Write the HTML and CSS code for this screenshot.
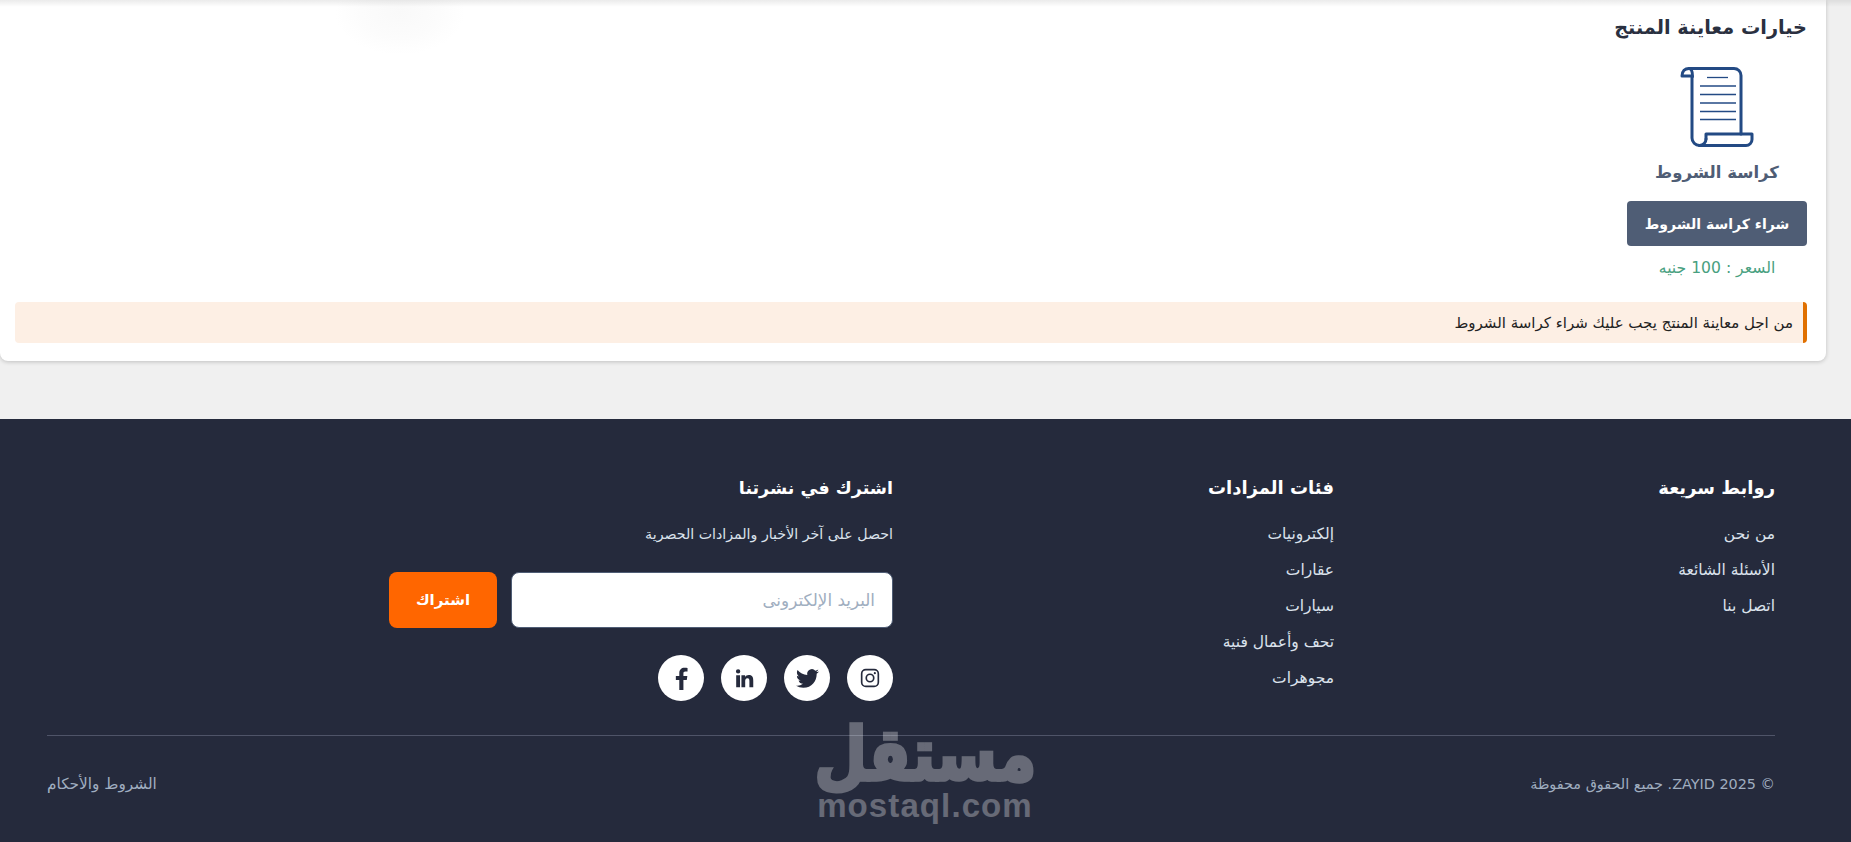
FILE: index.html
```html
<!DOCTYPE html>
<html lang="ar" dir="rtl">
<head>
<meta charset="utf-8">
<title>خيارات معاينة المنتج</title>
<link rel="stylesheet" href="styles.css">
</head>
<body>
<main class="page">
  <section class="card">
    <span class="blob"></span>
    <h2 class="card-title">خيارات معاينة المنتج</h2>
    <div class="option">
      <svg class="scroll" viewBox="0 0 74 80" fill="none" stroke="#234a84" stroke-width="3" stroke-linejoin="round" stroke-linecap="round">
        <path d="M12 10V71a7.500 7.500 0 0 0 7.500 7.500H66a6 6 0 0 0 6-6V67H26v5"/>
        <path d="M26 72a6.500 6.500 0 0 1-6.500 6.500"/>
        <path d="M12 9H2c0-5 3-7.500 7-7.500H54a7 7 0 0 1 7 7V67"/>
        <path d="M9 1.500c2.500 0 3.500 3 3.500 8"/>
        <g stroke-width="1.300" stroke-linecap="butt">
          <path d="M27 10.500H48"/>
          <path d="M20 19H56"/>
          <path d="M20 27.500H56"/>
          <path d="M20 36H56"/>
          <path d="M20 44.500H56"/>
          <path d="M20 52.500H56"/>
        </g>
      </svg>
      <h3 class="option-name">كراسة الشروط</h3>
      <button class="buy" type="button">شراء كراسة الشروط</button>
      <p class="price">السعر : 100 جنيه</p>
    </div>
    <div class="notice">من اجل معاينة المنتج يجب عليك شراء كراسة الشروط</div>
  </section>
</main>
<footer class="footer">
  <div class="columns">
    <div class="col">
      <h4 class="col-title">روابط سريعة</h4>
      <ul class="links">
        <li>من نحن</li>
        <li>الأسئلة الشائعة</li>
        <li>اتصل بنا</li>
      </ul>
    </div>
    <div class="col">
      <h4 class="col-title">فئات المزادات</h4>
      <ul class="links">
        <li>إلكترونيات</li>
        <li>عقارات</li>
        <li>سيارات</li>
        <li>تحف وأعمال فنية</li>
        <li>مجوهرات</li>
      </ul>
    </div>
    <div class="col">
      <h4 class="col-title">اشترك في نشرتنا</h4>
      <p class="lead">احصل على آخر الأخبار والمزادات الحصرية</p>
      <form class="subscribe">
        <input class="email" type="text" placeholder="البريد الإلكترونى">
        <button class="send" type="button">اشتراك</button>
      </form>
      <div class="social">
        <a class="soc" href="#" aria-label="Instagram">
          <svg viewBox="0 0 24 24" width="20" height="20" fill="none" stroke="#252a3c" stroke-width="2"><rect x="2" y="2" width="20" height="20" rx="5"/><circle cx="12" cy="12" r="4.500"/><circle cx="17.800" cy="6.200" r="1.300" fill="#252a3c" stroke="none"/></svg>
        </a>
        <a class="soc" href="#" aria-label="Twitter">
          <svg viewBox="0 0 24 24" width="23" height="23" fill="#252a3c"><path d="M23.950 4.570a10 10 0 0 1-2.820.77 4.960 4.960 0 0 0 2.160-2.720c-.95.550-2 .96-3.130 1.180a4.920 4.920 0 0 0-8.380 4.480C7.690 8.100 4.060 6.130 1.640 3.160a4.820 4.820 0 0 0-.66 2.470c0 1.710.87 3.210 2.190 4.100a4.900 4.900 0 0 1-2.230-.62v.06a4.920 4.920 0 0 0 3.950 4.830 4.940 4.940 0 0 1-2.210.08 4.940 4.940 0 0 0 4.600 3.420A9.870 9.870 0 0 1 0 19.540a14 14 0 0 0 7.560 2.210c9.050 0 14-7.500 14-13.980 0-.21 0-.42-.02-.63a9.940 9.940 0 0 0 2.460-2.550z"/></svg>
        </a>
        <a class="soc" href="#" aria-label="LinkedIn">
          <svg viewBox="0 0 24 24" width="21" height="21" fill="#252a3c"><path d="M6.900 22H2.500V8.200h4.400zM4.700 6.300a2.500 2.500 0 1 1 0-5 2.500 2.500 0 0 1 0 5zM22 22h-4.400v-6.700c0-1.600 0-3.700-2.200-3.700s-2.600 1.700-2.600 3.500V22H8.500V8.200h4.200v1.900h.1c.6-1.100 2-2.200 4.100-2.200 4.400 0 5.100 2.900 5.100 6.600z"/></svg>
        </a>
        <a class="soc" href="#" aria-label="Facebook">
          <svg viewBox="0 0 24 24" width="23" height="23" fill="#252a3c"><path d="M14 24V13.500h3.500l.6-4.200H14V6.700c0-1.200.4-2 2.100-2h2.200V1c-.4 0-1.700-.2-3.200-.2-3.200 0-5.400 2-5.400 5.500v3H6.100v4.200h3.600V24z"/></svg>
        </a>
      </div>
    </div>
  </div>
  <div class="bottom">
    <span class="copy">© 2025 ZAYID. جميع الحقوق محفوظة</span>
    <span class="terms">الشروط والأحكام</span>
  </div>
  <div class="mark">
    <span class="mark-ar">مستقل</span>
    <span class="mark-en">mostaql.com</span>
  </div>
</footer>
</body>
</html>
```
FILE: styles.css
```css
* { box-sizing: border-box; }
html, body { margin: 0; padding: 0; }
body {
  position: relative;
  background: #f0f0f0;
  font-family: "DejaVu Sans", "Noto Sans", sans-serif;
  color: #252a3c;
  height: 842px;
  overflow: hidden;
}
body::before {
  content: "";
  position: absolute;
  inset: 0 0 auto 0;
  height: 7px;
  background: linear-gradient(rgba(0,0,0,.08), rgba(0,0,0,0));
  z-index: 2;
}
.page { padding: 0 25px 0 0; height: 419px; }
.card {
  position: relative;
  background: #fff;
  height: 361px;
  border-radius: 0 0 8px 8px;
  padding: 14px 19px 0 15px;
  box-shadow: 0 1px 4px rgba(0,0,0,.2);
  overflow: hidden;
}
.blob {
  position: absolute;
  left: 335px;
  top: -30px;
  width: 130px;
  height: 85px;
  border-radius: 50%;
  background: radial-gradient(closest-side, #f9f9f9, #fcfcfc 60%, #ffffff);
}
.card-title {
  position: relative;
  margin: 0;
  font-size: 19.300px;
  line-height: 28px;
  font-weight: 700;
  color: #2a3040;
}
.option {
  display: flex;
  flex-direction: column;
  align-items: center;
  width: 180px;
  margin-top: 25px;
}
.scroll { width: 74px; height: 80px; display: block; }
.option-name {
  margin: 14px 0 0;
  font-size: 16.500px;
  line-height: 24px;
  font-weight: 700;
  color: #4f5d75;
}
.buy {
  width: 180px;
  height: 45px;
  margin-top: 16px;
  border: 0;
  border-radius: 4px;
  background: #4f5d75;
  color: #fff;
  font: 700 14px "DejaVu Sans", sans-serif;
}
.price {
  margin: 10px 0 0;
  font-size: 15.600px;
  line-height: 24px;
  color: #48a080;
}
.notice {
  margin-top: 22px;
  height: 41px;
  display: flex;
  align-items: center;
  padding-right: 10px;
  background: #fdefe4;
  border-right: 4px solid #e07000;
  border-radius: 4px;
  font-size: 15px;
  color: #222;
}
.footer {
  position: relative;
  height: 423px;
  background: #252a3c;
  padding: 57px 76px 0 47px;
  color: #fff;
}
.columns {
  display: grid;
  grid-template-columns: 409px 409px 1fr;
  column-gap: 32px;
}
.col-title {
  margin: 0;
  font-size: 18px;
  line-height: 24px;
  font-weight: 700;
  color: #fff;
}
.col:last-child .col-title { font-size: 17.500px; }
.links { list-style: none; margin: 16px 0 0; padding: 0; }
.links li {
  font-size: 15.500px;
  line-height: 36px;
  color: #dbe2ec;
}
.lead {
  margin: 22px 0 0;
  font-size: 14.200px;
  line-height: 24px;
  color: #dbe2ec;
}
.subscribe {
  display: flex;
  gap: 14px;
  width: 504px;
  margin-top: 26px;
}
.email {
  flex: 1;
  min-width: 0;
  height: 56px;
  border: 1px solid #4f5d75;
  border-radius: 8px;
  padding: 0 17px;
  background: #fff;
  font: 16.800px "DejaVu Sans", sans-serif;
}
.email::placeholder { color: #a0aec0; }
.send {
  width: 108px;
  height: 56px;
  border: 0;
  border-radius: 8px;
  background: #ff6600;
  color: #fff;
  font: 700 15px "DejaVu Sans", sans-serif;
}
.social { display: flex; gap: 17px; margin-top: 27px; }
.soc {
  width: 46px;
  height: 46px;
  border-radius: 50%;
  background: #fff;
  display: flex;
  align-items: center;
  justify-content: center;
}
.bottom {
  display: flex;
  justify-content: space-between;
  align-items: center;
  margin-top: 34px;
  border-top: 1px solid #4f5468;
  height: 94px;
  padding-top: 2px;
  color: #a0aec0;
}
.copy { font-size: 14.400px; }
.terms { font-size: 15.300px; }
.mark {
  position: absolute;
  left: 810px;
  top: 303px;
  width: 230px;
  display: flex;
  flex-direction: column;
  align-items: center;
  color: #fff;
  opacity: .3;
  font-weight: 700;
}
.mark-ar {
  font-size: 62px;
  line-height: 66px;
  -webkit-text-stroke: 3px #fff;
  transform: scale(.98, 1.18);
}
.mark-en {
  font-family: "Liberation Sans", sans-serif;
  font-size: 33px;
  line-height: 36px;
  letter-spacing: 1.100px;
}
```
